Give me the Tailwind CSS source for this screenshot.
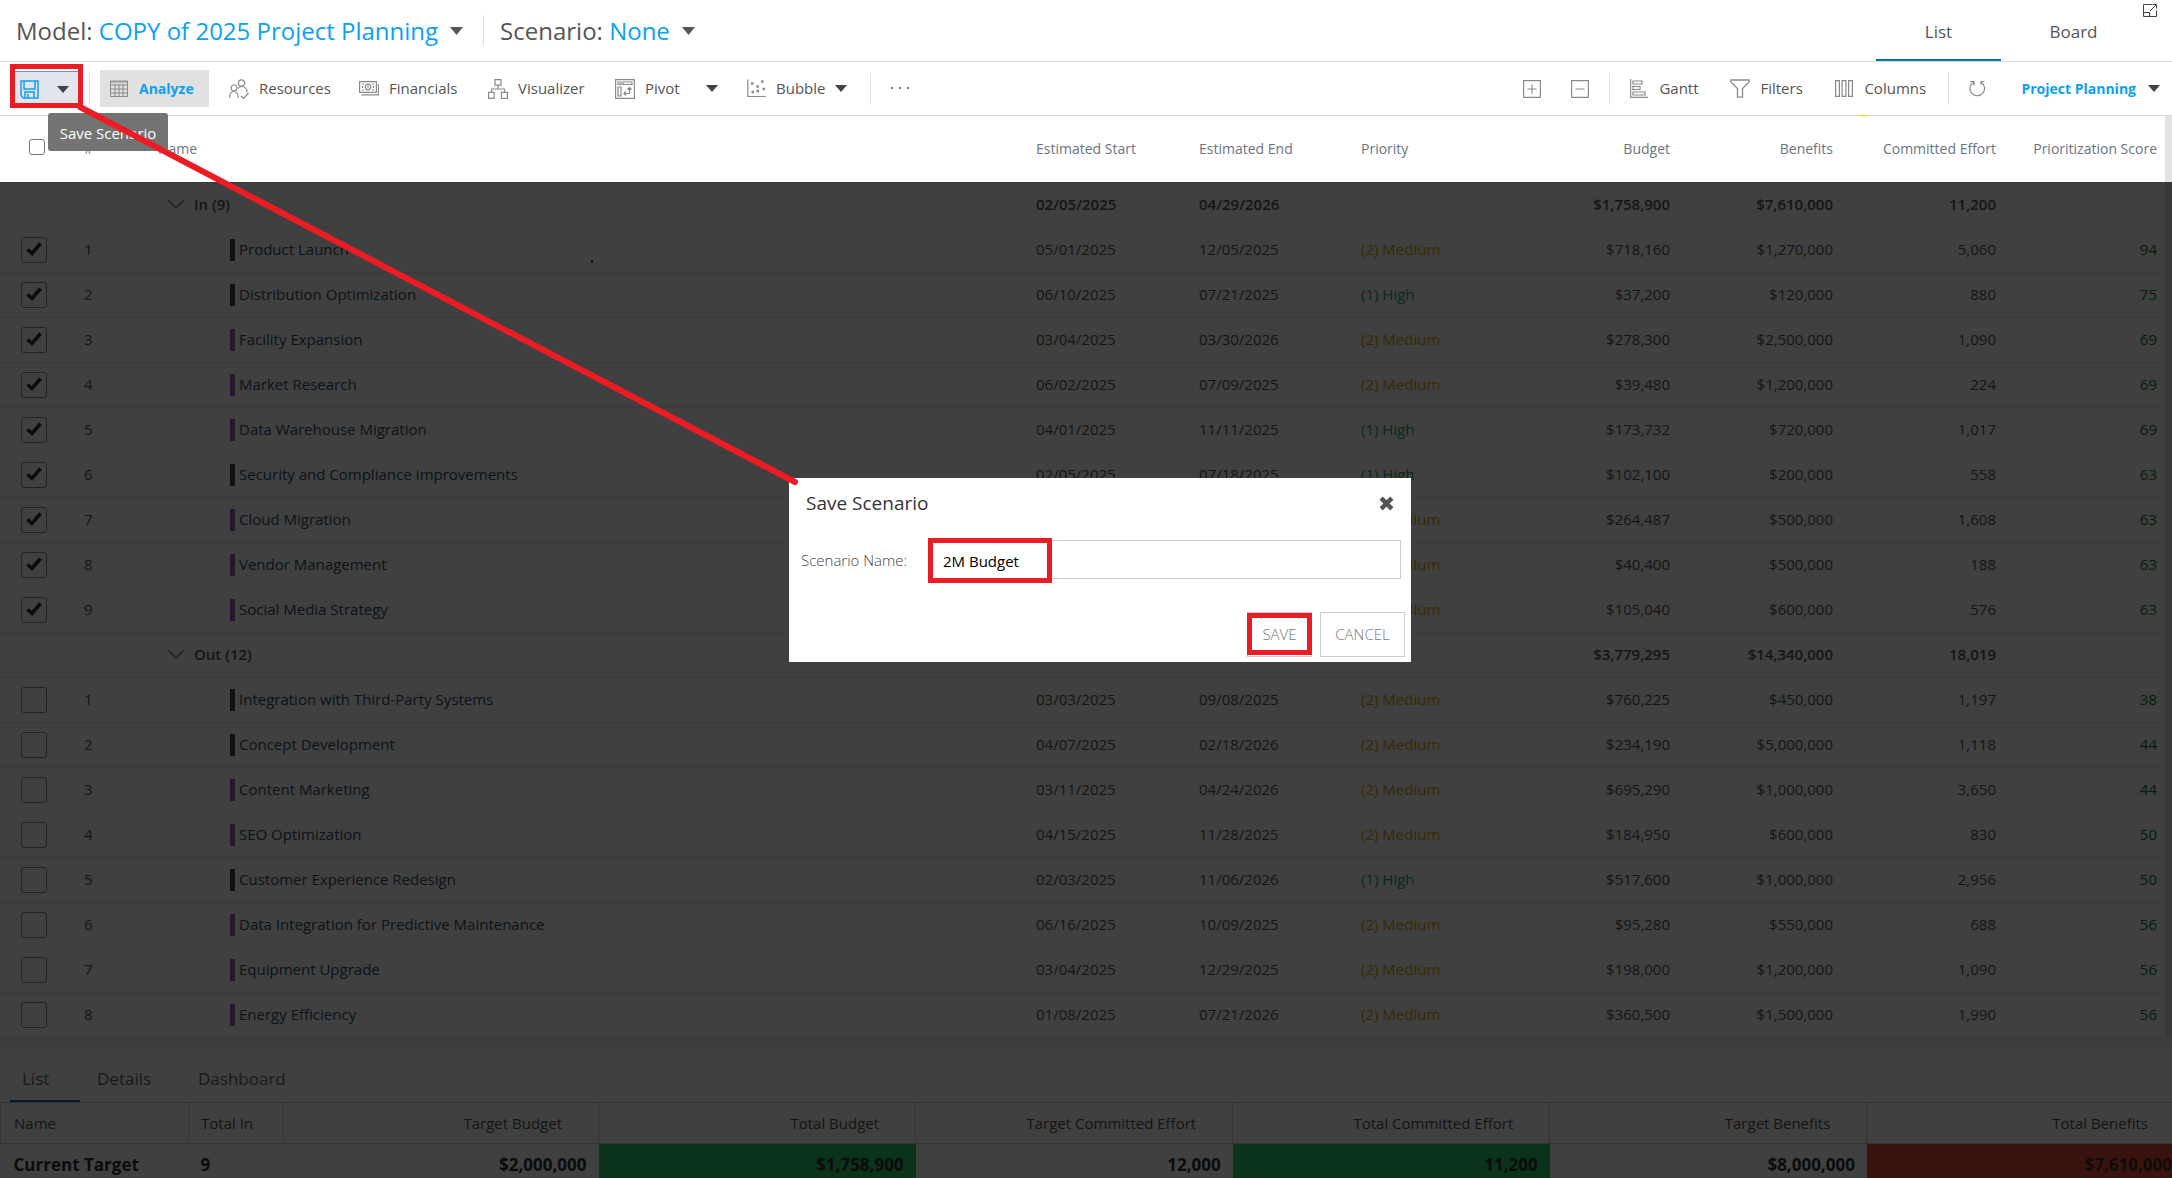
<!DOCTYPE html>
<html lang="en">
<head>
<meta charset="utf-8">
<title>Project Planning</title>
<script src="https://cdn.jsdelivr.net/npm/@tailwindcss/browser@4"></script>
</head>
<body class="bg-white font-['Open_Sans','Noto_Sans',sans-serif] text-[15px] text-[#555]">
<div class="relative flex h-screen flex-col overflow-hidden">

  <!-- Title bar -->
  <header class="flex h-[62px] shrink-0 items-center border-b border-[#dcdcdc] pl-4">
    <button class="flex items-center gap-3 text-[24px] whitespace-nowrap"><span>Model: <span class="text-[#0c9ff2]">COPY of 2025 Project Planning</span></span>
      <svg class="h-[8px] w-[13px]" viewBox="0 0 13 8"><path d="M0 0h13L6.500 8z" fill="#555"/></svg></button>
    <span class="ml-5 h-[31px] w-px bg-[#e2e2e2]"></span>
    <button class="ml-4 flex items-center gap-3 text-[24px] whitespace-nowrap"><span>Scenario: <span class="text-[#0c9ff2]">None</span></span>
      <svg class="h-[8px] w-[13px]" viewBox="0 0 13 8"><path d="M0 0h13L6.500 8z" fill="#555"/></svg></button>
    <nav class="ml-auto flex h-[61px] text-[17px]">
      <a href="#list" class="flex w-[125px] items-center justify-center border-b-2 border-[#0a70b5] pt-1">List</a>
      <a href="#board" class="flex w-[145px] items-center justify-center border-b-2 border-transparent pt-1">Board</a>
    </nav>
    <button aria-label="Open in new window" class="mr-[14px] -ml-1 self-start pt-1"><svg class="h-[14px] w-[16px]" viewBox="0 0 16 14" fill="none" stroke="#444"><path d="M10 .5H1.500v12h13V6.500M1.500 8.500h6v4M8 7l6-6M10.500.5h4v4"/></svg></button>
  </header>

  <!-- Toolbar -->
  <div class="flex h-[54px] shrink-0 items-center border-b border-[#d6d6d6] pl-[15px] whitespace-nowrap">
    <button id="save" aria-label="Save Scenario" class="flex h-[36px] w-[63px] items-center gap-[18px] border-t border-[#5b9bd5] bg-[#e3e5ec] pl-[5px]">
      <svg class="h-[19px] w-[19px]" viewBox="0 0 19 19" fill="none" stroke="#0c9ff2" stroke-width="1.500"><path d="M1 1h17v17H3.500L1 15.500zM4 1v8h11V1M5 18v-6h9v6M8 14v4"/></svg>
      <svg class="h-[7px] w-[12px]" viewBox="0 0 12 7"><path d="M0 0h12L6 7z" fill="#444"/></svg>
    </button>
    <span class="ml-[11px] h-[32px] w-px bg-[#e2e2e2]"></span>
    <button class="ml-[10px] mr-[10px] flex h-[37px] w-[109px] items-center gap-[11px] bg-[#e1e1e1] pl-[10px] text-[14px] font-bold text-[#0c9ff2]">
      <svg class="h-[17px] w-[18px]" viewBox="0 0 18 17" fill="none" stroke="#8a8a8a"><path d="M1 2h16M.5 1v15.500h17V1zM.5 5h17M.5 9h17M.5 13h17M5 4v12.500M9 4v12.500M13 4v12.500"/></svg>Analyze</button>
    <button class="flex h-[37px] w-[130px] items-center gap-[10px] pl-[10px]">
      <svg class="h-[20px] w-[20px]" viewBox="0 0 20 20" fill="none" stroke="#8a8a8a" stroke-width="1.200"><circle cx="12.500" cy="4" r="3.200"/><circle cx="5" cy="9" r="3"/><path d="M.6 19c0-4 1.500-6.500 4.400-6.500S9 15 9.500 19M9 9.500c1-1.500 2-2 3.500-2 3.500 0 5.500 2.500 5.500 6M12 17l2.500 2.500L19.500 14"/></svg>Resources</button>
    <button class="flex h-[37px] w-[129px] items-center gap-[10px] pl-[10px]">
      <svg class="h-[15px] w-[20px]" viewBox="0 0 20 15" fill="none" stroke="#8a8a8a" stroke-width="1.200"><path d="M.6.6h16.800v10.800H.6zM2.500 13.900h17V3M3 3h2M13 3h2M3 9h2M13 9h2M3.500 5v2M14.500 5v2"/><circle cx="9" cy="6" r="2.800"/><path d="M9 4.500v3"/></svg>Financials</button>
    <button class="flex h-[37px] w-[127px] items-center gap-[10px] pl-[10px]">
      <svg class="h-[20px] w-[20px]" viewBox="0 0 20 20" fill="none" stroke="#8a8a8a" stroke-width="1.200"><path d="M7 .6h6v5.500H7zM.6 13.400h5.500v6H.6zM13.400 13.400h6v6h-6zM10 6v4M3.500 13.400V10h13v3.400"/></svg>Visualizer</button>
    <button class="flex h-[37px] w-[132px] items-center gap-[10px] pl-[10px]">
      <svg class="h-[20px] w-[20px]" viewBox="0 0 20 20" fill="none" stroke="#8a8a8a" stroke-width="1.200"><path d="M.6.6h18.800v18.800H.6zM3 3h3v2.500H3zM8 3h9v2.500H8zM3 8h3v9H3zM14.500 8.500v6H9M12.500 10.500l2-2 2 2M11 12.500l-2 2 2 2"/></svg>Pivot
      <svg class="ml-4 h-[7px] w-[12px]" viewBox="0 0 12 7"><path d="M0 0h12L6 7z" fill="#444"/></svg></button>
    <button class="flex h-[37px] w-[133px] items-center gap-[10px] pl-[10px]">
      <svg class="h-[19px] w-[19px]" viewBox="0 0 19 19" fill="none" stroke="#8a8a8a" stroke-width="1.200"><path d="M.8.500v17h18"/><path d="M4 4.500h2.500M14 2.500h2.500M9.500 7.500H12M4.500 13H7M9.500 12H12M15.500 10H18" stroke-width="2.500"/></svg>Bubble
      <svg class="h-[7px] w-[12px]" viewBox="0 0 12 7"><path d="M0 0h12L6 7z" fill="#444"/></svg></button>
    <span class="h-[32px] w-px bg-[#e2e2e2]"></span>
    <button aria-label="More" class="ml-5 flex h-[37px] items-center"><svg class="h-[3px] w-[19px]" viewBox="0 0 19 3" fill="#777"><path d="M0 0h2v2H0zM8 0h2v2H8zM16 0h2v2h-2z"/></svg></button>

    <div class="ml-auto flex items-center pr-[12px]">
      <button aria-label="Expand all" class="mr-[30px]"><svg class="h-[18px] w-[18px]" viewBox="0 0 18 18" fill="none" stroke="#8a8a8a" stroke-width="1.200"><path d="M.6.6h16.800v16.800H.6zM9 4.500v9M4.500 9h9"/></svg></button>
      <button aria-label="Collapse all" class="mr-[20px]"><svg class="h-[18px] w-[18px]" viewBox="0 0 18 18" fill="none" stroke="#8a8a8a" stroke-width="1.200"><path d="M.6.6h16.800v16.800H.6zM4.500 9h9"/></svg></button>
      <span class="h-[32px] w-px bg-[#e2e2e2]"></span>
      <button class="flex h-[37px] w-[100px] items-center gap-[11px] ml-[20px]">
        <svg class="h-[19px] w-[18px]" viewBox="0 0 18 19" fill="none" stroke="#8a8a8a" stroke-width="1.200"><path d="M.6 0v18.400H18M3 2h9v3H3zM3 7.500h7v3H3zM3 13h12v3H3z"/></svg>Gantt</button>
      <button class="flex h-[37px] w-[105px] items-center gap-[10px]">
        <svg class="h-[19px] w-[20px]" viewBox="0 0 20 19" fill="none" stroke="#8a8a8a" stroke-width="1.300"><path d="M.8 1h18.400v1.800L12.500 9.500v8.700h-5V9.500L.8 2.800z"/></svg>Filters</button>
      <button class="flex h-[37px] w-[113px] items-center gap-[11px]">
        <svg class="h-[17px] w-[18px]" viewBox="0 0 18 17" fill="none" stroke="#8a8a8a" stroke-width="1.200"><path d="M.6.6h3.800v15.800H.6zM7.100.6h3.800v15.800H7.100zM13.600.6h3.800v15.800h-3.800z"/></svg>Columns</button>
      <span class="h-[32px] w-px bg-[#e2e2e2]"></span>
      <button aria-label="Refresh" class="ml-[20px]"><svg class="h-[17px] w-[17px]" viewBox="0 0 17 17" fill="none" stroke="#8a8a8a" stroke-width="1.200"><path d="M4.500 2.200A7.300 7.300 0 1 0 12 2.200M1 1.500h4v4M15.500 1.500H12v3"/></svg></button>
      <button class="ml-[35px] flex h-[37px] items-center gap-[12px] text-[14px] font-bold text-[#0c9ff2]">Project Planning
        <svg class="h-[7px] w-[12px]" viewBox="0 0 12 7"><path d="M0 0h12L6 7z" fill="#444"/></svg></button>
    </div>
  </div>

  <!-- Column headings and rows share one table -->
  <div class="relative shrink-0 border-r-7 border-[#e2e2e2]">
    <table class="w-full table-fixed border-collapse text-left whitespace-nowrap">
      <colgroup><col class="w-[72px]"><col class="w-[78px]"><col><col class="w-[163px]"><col class="w-[162px]"><col class="w-[163px]"><col class="w-[162px]"><col class="w-[163px]"><col class="w-[163px]"><col class="w-[161px]"></colgroup>
      <thead>
        <tr class="h-[66px] border-b border-[#d6dadd] text-[14px] text-[#6b7480] *:px-2 *:font-normal">
          <th><input type="checkbox" aria-label="Select all" class="mb-1 ml-[21px] block size-4 appearance-none rounded-[3px] border border-[#777] bg-white"></th>
          <th><span class="pl-1">#</span></th><th>Name</th><th>Estimated Start</th><th>Estimated End</th><th>Priority</th>
          <th class="text-right">Budget</th><th class="text-right">Benefits</th><th class="text-right">Committed Effort</th><th class="text-right">Prioritization Score</th>
        </tr>
      </thead>
      <tbody id="rows" class="text-[15px] text-[#555]"></tbody>
    </table>
  </div>

  <!-- Targets panel -->
  <div class="h-[10px] shrink-0 bg-[#f0f0f0]"></div>
  <nav class="flex h-[55px] shrink-0 border-b border-[#c8c8c8] pl-[10px] text-[17px] text-[#666]">
    <a href="#targets" class="flex w-[70px] items-center border-b-2 border-[#0a70b5] pt-[10px] pl-[12px]">List</a>
    <a href="#details" class="flex w-[101px] items-center border-b-2 border-transparent pt-[10px] pl-[17px]">Details</a>
    <a href="#dashboard" class="flex items-center border-b-2 border-transparent pt-[10px] pl-[17px]">Dashboard</a>
  </nav>
  <table class="w-[calc(100%+12px)] shrink-0 table-fixed border-collapse text-right whitespace-nowrap">
    <colgroup><col class="w-[188px]"><col class="w-[95px]"><col class="w-[315px]"><col><col><col><col><col></colgroup>
    <thead><tr class="h-[41px] border-b border-[#c8c8c8] text-[15px] text-[#555] *:border-l *:border-[#cfcfcf] *:pr-9 *:font-normal">
      <th class="pl-[13px] text-left">Name</th><th class="pl-[12px] text-left">Total In</th><th>Target Budget</th><th>Total Budget</th><th>Target Committed Effort</th><th>Total Committed Effort</th><th>Target Benefits</th><th>Total Benefits</th></tr></thead>
    <tbody><tr class="h-[42px] text-[17px] font-bold text-[#333] *:pr-3">
      <td class="pl-[13px] text-left">Current Target</td><td class="pl-[12px] text-left">9</td><td>$2,000,000</td><td class="bg-[#2ecc71]">$1,758,900</td><td>12,000</td><td class="bg-[#2ecc71]">11,200</td><td>$8,000,000</td><td class="bg-[#e74c3c]">$7,610,000</td></tr></tbody>
  </table>

  <!-- Dimmed backdrop below the headings -->
  <div class="absolute inset-x-0 top-[182px] bottom-0 bg-black/75"></div>

  <!-- Tooltip -->
  <div role="tooltip" class="absolute top-[113px] left-[48px] flex h-[38px] w-[120px] items-center justify-center rounded-[3px] bg-[#737373] pt-[2px] text-[15px] text-white">Save Scenario</div>

  <!-- Dialog -->
  <form role="dialog" aria-labelledby="dlg" class="absolute top-[478px] left-[789px] flex w-[622px] flex-col bg-white pb-[5px]" onsubmit="return false">
    <div class="flex h-[50px] items-center justify-between pr-[17px] pl-[17px]">
      <h2 id="dlg" class="text-[19px] text-[#333]">Save Scenario</h2>
      <button type="button" aria-label="Close"><svg class="h-[15px] w-[15px]" viewBox="0 0 14 14"><path d="M2 2l10 10M12 2L2 12" stroke="#555" stroke-width="4.200"/></svg></button>
    </div>
    <div class="mt-[12px] flex h-[39px] items-center pr-[10px] pl-[12px]">
      <label for="name" class="w-[129px] pt-[2px] text-[15px] font-light text-[#444]">Scenario Name:</label>
      <input id="name" value="2M Budget" class="h-full min-w-0 flex-1 border border-[#ccc] px-[12px] pt-[2px] text-[15px] text-black">
    </div>
    <div class="mt-[33px] flex justify-end gap-2 pr-[6px] text-[15px] font-light text-[#777]">
      <button class="h-[45px] w-[65px] border border-[#ccc]">SAVE</button>
      <button type="button" class="h-[45px] w-[85px] border border-[#ccc]">CANCEL</button>
    </div>
  </form>

  <!-- Callouts -->
  <svg class="pointer-events-none absolute inset-0 h-full w-full" fill="none" stroke="#ed1c24" stroke-width="5">
    <path d="M80 107L795 482" stroke-width="6" stroke-linecap="round"/>
    <path d="M12.500 66.500h68v39h-68zM930.500 540.500h119v40h-119zM1249.500 615.500h60v37h-60z"/>
    <path d="M1859 115.500h9" stroke="#d3dd1c" stroke-width="1"/><path d="M591 261.500h2" stroke="#000" stroke-width="2"/>
  </svg>
</div>

<script>
const inRows = [
  ["Product Launch","d","05/01/2025","12/05/2025","M","$718,160","$1,270,000","5,060",94],
  ["Distribution Optimization","d","06/10/2025","07/21/2025","H","$37,200","$120,000","880",75],
  ["Facility Expansion","p","03/04/2025","03/30/2026","M","$278,300","$2,500,000","1,090",69],
  ["Market Research","p","06/02/2025","07/09/2025","M","$39,480","$1,200,000","224",69],
  ["Data Warehouse Migration","p","04/01/2025","11/11/2025","H","$173,732","$720,000","1,017",69],
  ["Security and Compliance Improvements","d","02/05/2025","07/18/2025","H","$102,100","$200,000","558",63],
  ["Cloud Migration","p","03/05/2025","10/14/2025","M","$264,487","$500,000","1,608",63],
  ["Vendor Management","p","05/12/2025","08/22/2025","M","$40,400","$500,000","188",63],
  ["Social Media Strategy","p","04/07/2025","04/29/2026","M","$105,040","$600,000","576",63]];
const outRows = [
  ["Integration with Third-Party Systems","d","03/03/2025","09/08/2025","M","$760,225","$450,000","1,197",38],
  ["Concept Development","d","04/07/2025","02/18/2026","M","$234,190","$5,000,000","1,118",44],
  ["Content Marketing","p","03/11/2025","04/24/2026","M","$695,290","$1,000,000","3,650",44],
  ["SEO Optimization","p","04/15/2025","11/28/2025","M","$184,950","$600,000","830",50],
  ["Customer Experience Redesign","d","02/03/2025","11/06/2026","H","$517,600","$1,000,000","2,956",50],
  ["Data Integration for Predictive Maintenance","p","06/16/2025","10/09/2025","M","$95,280","$550,000","688",56],
  ["Equipment Upgrade","p","03/04/2025","12/29/2025","M","$198,000","$1,200,000","1,090",56],
  ["Energy Efficiency","p","01/08/2025","07/21/2026","M","$360,500","$1,500,000","1,990",56]];
const group = (n, s, e, b, f, c) => `<tr class="h-[45px] border-b border-[#e6e6e6] font-semibold *:px-2"><td></td><td></td>
  <td><span class="flex items-center gap-[10px] pl-[10px]"><svg class="h-[9px] w-[16px]" viewBox="0 0 16 9" fill="none" stroke="#666" stroke-width="1.200"><path d="M.5.500L8 8 15.500.500"/></svg>${n}</span></td>
  <td>${s}</td><td>${e}</td><td></td><td class="text-right">${b}</td><td class="text-right">${f}</td><td class="text-right">${c}</td><td></td></tr>`;
const row = (r, i, on) => `<tr class="h-[45px] border-b border-[#e6e6e6] *:px-2">
  <td><span class="relative ml-[13px] block size-[26px]"><input type="checkbox" aria-label="${r[0]}" ${on ? "checked" : ""} class="block size-[26px] appearance-none rounded-[3px] border border-[#8a8a8a]">${on ? '<svg class="pointer-events-none absolute top-[5px] left-[5px] h-[14px] w-[16px]" viewBox="0 0 16 14" fill="none" stroke="#333" stroke-width="3.500"><path d="M1.500 7.500L6 11.500 14.500 1.500"/></svg>' : ""}</span></td>
  <td><span class="pl-1">${i + 1}</span></td>
  <td><span class="flex items-center gap-1 pl-[72px]"><span class="h-[22px] w-[5px] ${r[1] === "d" ? "bg-[#34495e]" : "bg-[#9b59b6]"}"></span><a href="#item" class="text-[#2f4d6b]">${r[0]}</a></span></td>
  <td>${r[2]}</td><td>${r[3]}</td><td class="${r[4] === "M" ? "text-[#e0a000]" : "text-[#1aa67c]"}">${r[4] === "M" ? "(2) Medium" : "(1) High"}</td>
  <td class="text-right">${r[5]}</td><td class="text-right">${r[6]}</td><td class="text-right">${r[7]}</td><td class="text-right text-[#0a7d28]">${r[8]}</td></tr>`;
document.getElementById("rows").innerHTML =
  group("In (9)", "02/05/2025", "04/29/2026", "$1,758,900", "$7,610,000", "11,200") + inRows.map((r, i) => row(r, i, true)).join("") +
  group("Out (12)", "", "", "$3,779,295", "$14,340,000", "18,019") + outRows.map((r, i) => row(r, i, false)).join("");
</script>
</body>
</html>
